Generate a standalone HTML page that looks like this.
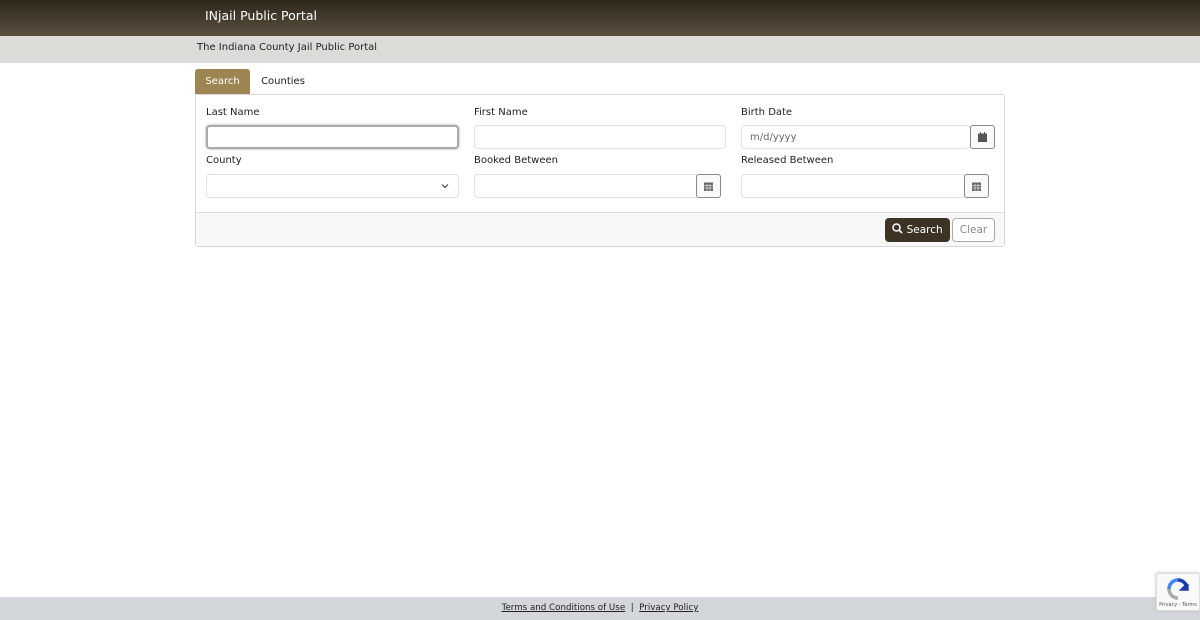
<!DOCTYPE html>
<html><head><meta charset="utf-8"><style>
*{box-sizing:border-box;margin:0;padding:0}
body{width:1200px;height:620px;position:relative;font-family:"DejaVu Sans","Liberation Sans",sans-serif;background:#fff;color:#222;overflow:hidden}
.hdr{position:absolute;left:0;top:0;width:1200px;height:36px;background:linear-gradient(#2f271b,#5a5040);color:#fff;font-size:12.5px;padding:8px 0 0 205px}
.sub{position:absolute;left:0;top:36px;width:1200px;height:27px;background:#dcdbd8;font-size:10px;padding:6px 0 0 197px;color:#222}
.tab{position:absolute;top:69px;height:25px;font-size:10px;padding-top:7px;text-align:center}
.panel{position:absolute;left:195px;top:94px;width:810px;height:153px;border:1px solid #d6d6d6;border-radius:3px}
.pf{position:absolute;left:0;top:117px;width:808px;height:34px;background:#f7f7f7;border-top:1px solid #ddd}
.lbl{position:absolute;font-size:10px;color:#222}
.in{position:absolute;height:24px;border:1px solid #e2e2e2;border-radius:4px;background:#fff;font-size:10px;color:#666;padding:6px 8px}
.cal{position:absolute;width:25px;height:24px;border:1px solid #888;border-radius:3px;background:#fafafa;display:flex;align-items:center;justify-content:center}
.btn{position:absolute;top:123px;height:24px;border-radius:4px;font-size:10.5px;padding-top:5px;text-align:center}
.foot{position:absolute;left:0;top:597px;width:1200px;height:23px;background:#d3d6db;font-size:8.7px;text-align:center;padding-top:6px;color:#222}
.foot a{color:#222;text-decoration:underline}
</style></head><body>
<div class="hdr">INjail Public Portal</div>
<div class="sub">The Indiana County Jail Public Portal</div>
<div class="tab" style="left:195px;width:55px;background:#9c8552;color:#fff;border-radius:3px 3px 0 0">Search</div>
<div class="tab" style="left:252px;width:62px;color:#222">Counties</div>
<div class="panel">
<div class="lbl" style="left:10px;top:12px">Last Name</div>
<div class="in" style="left:10px;top:30px;width:253px;border:2px solid #aaa;box-shadow:0 0 2px #999"></div>
<div class="lbl" style="left:278px;top:12px">First Name</div>
<div class="in" style="left:278px;top:30px;width:252px"></div>
<div class="lbl" style="left:545px;top:12px">Birth Date</div>
<div class="in" style="left:545px;top:30px;width:230px">m/d/yyyy</div>
<div class="cal" style="left:774px;top:30px"><svg width="9" height="10" viewBox="0 0 9 10"><rect x="0" y="1.5" width="9" height="8.5" fill="#555"/><rect x="2" y="0" width="1" height="2" fill="#555"/><rect x="6" y="0" width="1" height="2" fill="#555"/></svg></div>
<div class="lbl" style="left:10px;top:60px">County</div>
<div class="in" style="left:10px;top:79px;width:253px"><svg style="position:absolute;right:9px;top:8px" width="8" height="6" viewBox="0 0 8 6"><path d="M1 1.5 4 4.5 7 1.5" stroke="#444" fill="none" stroke-width="1.2"/></svg></div>
<div class="lbl" style="left:278px;top:60px">Booked Between</div>
<div class="in" style="left:278px;top:79px;width:225px"></div>
<div class="cal" style="left:500px;top:79px"><svg width="9" height="10" viewBox="0 0 9 10"><rect x="0" y="1.5" width="9" height="8.5" fill="#666"/><path d="M0 4.5h9M3 3v7M6 3v7M0 7h9" stroke="#fff" stroke-width=".6"/></svg></div>
<div class="lbl" style="left:545px;top:60px">Released Between</div>
<div class="in" style="left:545px;top:79px;width:225px"></div>
<div class="cal" style="left:768px;top:79px"><svg width="9" height="10" viewBox="0 0 9 10"><rect x="0" y="1.5" width="9" height="8.5" fill="#666"/><path d="M0 4.5h9M3 3v7M6 3v7M0 7h9" stroke="#fff" stroke-width=".6"/></svg></div>
<div class="pf"></div>
<div class="btn" style="left:689px;width:65px;background:#3d3325;color:#fff"><svg width="11" height="11" viewBox="0 0 11 11" style="vertical-align:-1px"><circle cx="4.5" cy="4.5" r="3.5" stroke="#fff" stroke-width="1.5" fill="none"/><path d="M7 7l3 3" stroke="#fff" stroke-width="1.7"/></svg> Search</div>
<div class="btn" style="left:756px;width:43px;border:1px solid #aaa;background:#fff;color:#888">Clear</div>
</div>
<div class="foot"><a>Terms and Conditions of Use</a> &nbsp;|&nbsp; <a>Privacy Policy</a></div>
<div style="position:absolute;left:1156px;top:573px;width:44px;height:38px;background:#f9f9f9;border:1px solid #ddd;border-radius:2px;box-shadow:0 0 3px #bbb">
<svg style="position:absolute;left:9px;top:4px" width="24" height="22" viewBox="0 0 24 22"><path d="M12 2a9 9 0 0 1 9 9h-4l5-5" stroke="#1c3aa9" stroke-width="3.5" fill="none"/><path d="M12 2a9 9 0 0 0-9 9" stroke="#4285f4" stroke-width="3.5" fill="none"/><path d="M3 11a9 9 0 0 0 9 9" stroke="#aaa" stroke-width="3.5" fill="none"/></svg>
<div style="position:absolute;left:0;top:28px;width:42px;text-align:center;font-size:5px;color:#555">Privacy - Terms</div></div>
</body></html>
